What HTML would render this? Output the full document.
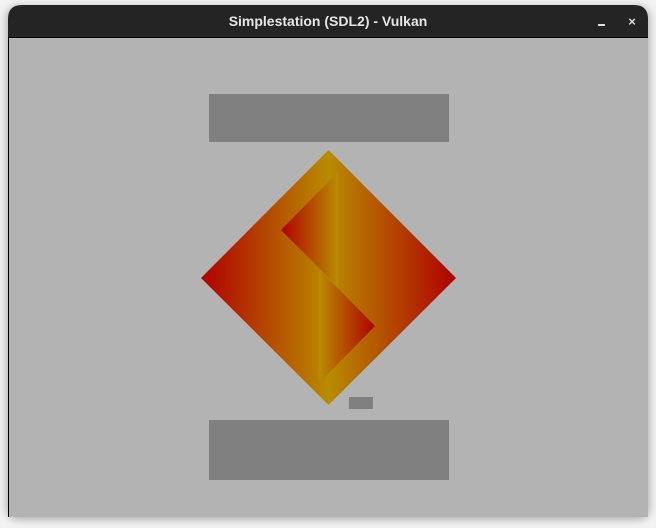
<!DOCTYPE html>
<html><head><meta charset="utf-8"><style>
html,body{margin:0;padding:0;width:656px;height:528px;overflow:hidden;background:#f2f2f2;}
</style></head><body>
<svg width="656" height="528" viewBox="0 0 656 528" xmlns="http://www.w3.org/2000/svg">
<defs>
<linearGradient id="big" x1="201" y1="0" x2="456" y2="0" gradientUnits="userSpaceOnUse">
<stop offset="0" stop-color="#b00000"/><stop offset="0.5" stop-color="#b88c00"/><stop offset="1" stop-color="#b00000"/>
</linearGradient>
<linearGradient id="up" x1="281" y1="0" x2="338" y2="0" gradientUnits="userSpaceOnUse">
<stop offset="0" stop-color="#b00000"/><stop offset="1" stop-color="#b88c00"/>
</linearGradient>
<linearGradient id="lo" x1="319" y1="0" x2="375" y2="0" gradientUnits="userSpaceOnUse">
<stop offset="0" stop-color="#b88c00"/><stop offset="1" stop-color="#b00000"/>
</linearGradient>
<filter id="sh" x="-10%" y="-10%" width="120%" height="120%"><feGaussianBlur stdDeviation="4"/></filter>
</defs>
<rect x="6" y="6" width="644" height="514" rx="12" fill="#000" opacity="0.25" filter="url(#sh)"/>
<path d="M8 38 V19 Q8 5 22 5 H634 Q648 5 648 19 V38 Z" fill="#242424"/>
<rect x="8" y="38" width="640" height="479" fill="#b3b3b3"/>
<rect x="8" y="38" width="1" height="479" fill="#000"/>
<rect x="8" y="37" width="640" height="1" fill="#000"/>
<text x="328" y="26" text-anchor="middle" font-family="Liberation Sans, sans-serif" font-weight="bold" font-size="14" fill="#e6e6e6">Simplestation (SDL2) - Vulkan</text>
<rect x="598" y="24" width="7" height="2" fill="#ddd"/>
<text x="632" y="26" text-anchor="middle" font-family="Liberation Sans, sans-serif" font-weight="bold" font-size="13" fill="#ddd">×</text>
<rect x="209" y="94" width="240" height="48" fill="#808080"/>
<rect x="209" y="420" width="240" height="60" fill="#808080"/>
<rect x="349" y="397" width="24" height="12" fill="#808080"/>
<polygon points="328.5,150 456,278 328.5,405 201,278" fill="url(#big)"/>
<polygon points="338,172 338,287 281,230" fill="url(#up)"/>
<polygon points="319,269 375,326 319,383" fill="url(#lo)"/>
</svg>
</body></html>
